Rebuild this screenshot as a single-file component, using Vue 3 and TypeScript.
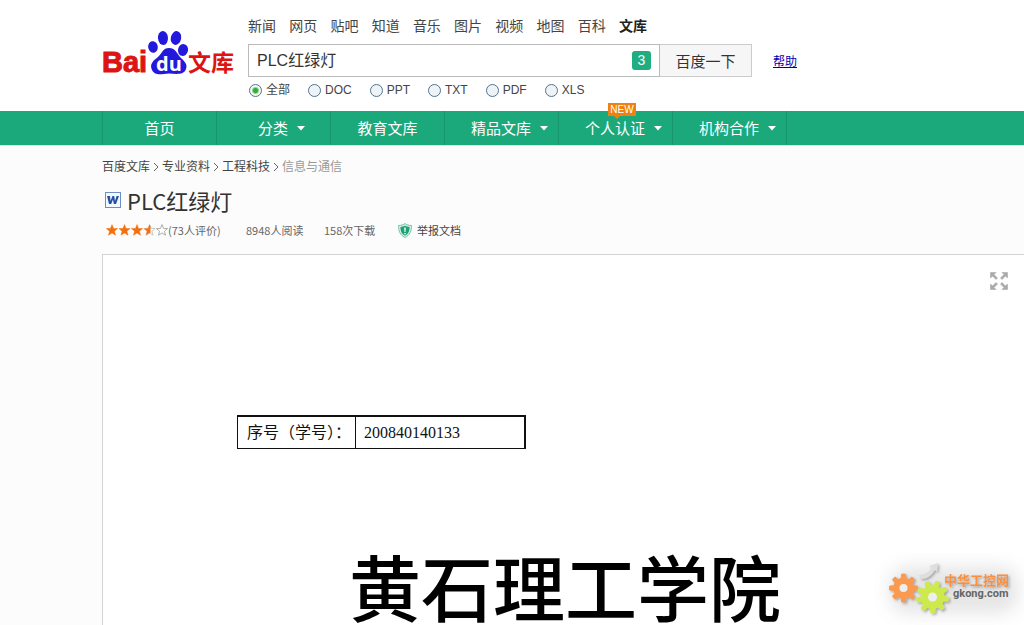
<script setup lang="ts">
import { ref } from 'vue'

interface NavItem {
  label: string
  menu: boolean
  isNew?: boolean
}

const channels: string[] = ['新闻', '网页', '贴吧', '知道', '音乐', '图片', '视频', '地图', '百科', '文库']
const formats: string[] = ['全部', 'DOC', 'PPT', 'TXT', 'PDF', 'XLS']
const navItems: NavItem[] = [
  { label: '首页', menu: false },
  { label: '分类', menu: true },
  { label: '教育文库', menu: false },
  { label: '精品文库', menu: true },
  { label: '个人认证', menu: true, isNew: true },
  { label: '机构合作', menu: true },
]
const crumbs: string[] = ['百度文库', '专业资料', '工程科技']

const query = ref('PLC红绿灯')
const format = ref('全部')

const star = 'M6 0.6 L7.5 4.4 L11.6 4.6 L8.4 7.2 L9.5 11.2 L6 8.9 L2.5 11.2 L3.6 7.2 L0.4 4.6 L4.5 4.4 Z'

function gear(cx: number, cy: number, outer: number, inner: number, teeth: number, turn: number): string {
  const points: string[] = []
  const step = (Math.PI * 2) / teeth
  for (let i = 0; i < teeth; i++) {
    const a = i * step + turn
    const corners: [number, number][] = [
      [inner, -0.3],
      [outer, -0.17],
      [outer, 0.17],
      [inner, 0.3],
    ]
    for (const [r, t] of corners) {
      points.push(`${(cx + r * Math.cos(a + t * step)).toFixed(1)},${(cy + r * Math.sin(a + t * step)).toFixed(1)}`)
    }
  }
  return points.join(' ')
}

const orangeGear = gear(29.5, 37, 14, 10, 8, 0)
const greenGear = gear(58.5, 46, 16, 11.5, 9, 0.15)
</script>

<template>
  <div class="page">
    <header class="header">
      <a class="logo" href="#" aria-label="百度文库">
        <svg width="136" height="50" viewBox="0 0 136 50">
          <text class="logo-bai" x="0" y="44">Bai</text>
          <g fill="#2319dc">
            <ellipse cx="51" cy="19" rx="4.8" ry="5.8" transform="rotate(-12 51 19)" />
            <ellipse cx="61" cy="10" rx="5" ry="7" transform="rotate(-4 61 10)" />
            <ellipse cx="74" cy="10" rx="5.2" ry="7" transform="rotate(12 74 10)" />
            <ellipse cx="81" cy="22" rx="5" ry="6" transform="rotate(12 81 22)" />
            <path d="M67 20C73 20 75 25 78 29C82 33 86 36 84 41C82 47 75 46 67 45.5C59 46 53 48 50 42C47 36 52 32 56 29C60 25 61 20 67 20Z" />
          </g>
          <text class="logo-du" x="54" y="43">du</text>
          <text class="logo-wenku" x="86" y="43">文库</text>
        </svg>
      </a>
      <div class="search">
        <nav class="channels">
          <a v-for="c in channels" :key="c" href="#" :class="{ current: c === '文库' }">{{ c }}</a>
        </nav>
        <form class="search-row" @submit.prevent>
          <div class="search-box">
            <input v-model="query" type="text" aria-label="搜索" />
            <span class="count">3</span>
          </div>
          <button class="submit" type="submit">百度一下</button>
          <a class="help" href="#">帮助</a>
        </form>
        <div class="formats">
          <label v-for="f in formats" :key="f">
            <input v-model="format" type="radio" name="format" :value="f" />
            <span>{{ f }}</span>
          </label>
        </div>
      </div>
    </header>

    <nav class="main-nav">
      <a v-for="n in navItems" :key="n.label" href="#" :class="{ menu: n.menu }">
        {{ n.label }}
        <svg v-if="n.menu" class="caret" width="8" height="5" viewBox="0 0 8 5"><path d="M0 0H8L4 4.5Z" fill="#fff" /></svg>
        <span v-if="n.isNew" class="new">NEW</span>
      </a>
    </nav>

    <main>
      <nav class="crumbs">
        <template v-for="c in crumbs" :key="c">
          <a href="#">{{ c }}</a>
          <svg width="12" height="10" viewBox="0 0 12 10"><path d="M4 1L8 5L4 9" fill="none" stroke="#666" /></svg>
        </template>
        <span>信息与通信</span>
      </nav>

      <div class="title">
        <svg width="16" height="16" viewBox="0 0 16 16">
          <rect x="0.5" y="0.5" width="15" height="15" fill="#f4f8ff" stroke="#6b8fc4" />
          <path d="M2 4H5L5.6 9L7.4 4H9.2L10 9L11.6 4H14L11 12H8.8L8 7.6L6.2 12H4Z" fill="#2450a8" />
        </svg>
        <h1>PLC红绿灯</h1>
      </div>

      <div class="meta">
        <svg class="stars" width="62" height="12" viewBox="0 0 62 12" role="img" aria-label="3.5">
          <g fill="#f4700c" stroke="#f4700c" stroke-width="0.5">
            <path :d="star" />
            <path :d="star" transform="translate(12.5 0)" />
            <path :d="star" transform="translate(25 0)" />
          </g>
          <path :d="star" transform="translate(37.5 0)" fill="#fff" stroke="#bbb" stroke-width="0.8" />
          <path d="M44.5 2V9.2L43.5 8.9L40 11.2L41.1 7.2L37.9 4.6L42 4.4L43.5 0.6Z" fill="#f4700c" />
          <path :d="star" transform="translate(50 0)" fill="#fff" stroke="#999" stroke-width="0.8" />
        </svg>
        <span class="rating">(73人评价)</span>
        <span class="reads">8948人阅读</span>
        <span class="downloads">158次下载</span>
        <a class="report" href="#">
          <svg width="14" height="15" viewBox="0 0 14 15">
            <path d="M7 0.6C9 2 11 2.5 13.4 2.5C13.6 8 12 12 7 14.5C2 12 0.4 8 0.6 2.5C3 2.5 5 2 7 0.6Z" fill="#dff3ea" stroke="#72bfa0" />
            <path d="M7 2.6C8.5 3.6 10 4 11.6 4C11.6 8 10.5 11 7 12.8C3.5 11 2.4 8 2.4 4C4 4 5.5 3.6 7 2.6Z" fill="#1fa076" />
            <path d="M6.2 4.5H7.8L7.5 9H6.5ZM6.2 10H7.8V11.3H6.2Z" fill="#fff" />
          </svg>
          举报文档
        </a>
      </div>

      <section class="document">
        <button class="expand" type="button" aria-label="全屏">
          <svg width="18" height="18" viewBox="0 0 18 18">
            <g fill="#aaa" stroke="#aaa" stroke-width="0.6">
              <path d="M0.5 0.5H6L4 2.5L7.5 6L6 7.5L2.5 4L0.5 6Z" />
              <path d="M17.5 0.5H12L14 2.5L10.5 6L12 7.5L15.5 4L17.5 6Z" />
              <path d="M0.5 17.5H6L4 15.5L7.5 12L6 10.5L2.5 14L0.5 12Z" />
              <path d="M17.5 17.5H12L14 15.5L10.5 12L12 10.5L15.5 14L17.5 12Z" />
            </g>
          </svg>
        </button>
        <table class="serial">
          <tbody>
            <tr>
              <th scope="row">序号（学号）：</th>
              <td>200840140133</td>
            </tr>
          </tbody>
        </table>
        <h2>黄石理工学院</h2>
      </section>
    </main>

    <div class="watermark">
      <svg width="150" height="74" viewBox="0 0 150 74">
        <defs>
          <filter id="halo" x="-20%" y="-40%" width="140%" height="180%"><feGaussianBlur stdDeviation="9" /></filter>
          <filter id="drop" x="-20%" y="-20%" width="150%" height="150%">
            <feDropShadow dx="1.5" dy="1.5" stdDeviation="1.2" flood-color="#555" flood-opacity="0.45" />
          </filter>
        </defs>
        <rect x="16" y="16" width="128" height="46" rx="18" fill="#888" opacity="0.22" filter="url(#halo)" />
        <g filter="url(#drop)">
          <path d="M45 24C52 24 55 20 58 17L55 15L64 12L63 21L61 19C57 25 53 28 47 28Z" fill="#dedede" />
          <polygon :points="orangeGear" fill="#fb9a50" stroke="#fb9a50" stroke-linejoin="round" />
          <polygon :points="greenGear" fill="#cdea4e" stroke="#cdea4e" stroke-linejoin="round" />
          <circle cx="29.5" cy="37" r="4" fill="#eee" />
          <circle cx="58.5" cy="46" r="4.5" fill="#eee" />
          <text class="mark-name" x="70" y="34">中华工控网</text>
        </g>
        <text class="mark-site" x="79" y="46">gkong.com</text>
      </svg>
    </div>
  </div>
</template>

<style>
body {
  margin: 0;
}
</style>

<style scoped>
.page {
  position: relative;
  min-height: 100vh;
  display: flex;
  flex-direction: column;
  background: #fcfcfc;
  color: #444;
  font-family: "Liberation Sans", "Noto Sans CJK SC", sans-serif;
  font-size: 12px;
}
a {
  color: inherit;
  text-decoration: none;
}
svg {
  display: block;
  flex: none;
}
.header {
  display: flex;
  gap: 10px;
  height: 111px;
  padding-left: 102px;
  background: #fff;
}
.logo {
  padding-top: 28px;
}
.logo-bai,
.logo-wenku {
  font-weight: 700;
  fill: #dc1414;
  stroke: #dc1414;
}
.logo-bai {
  font-size: 29px;
}
.logo-wenku {
  font-family: "Noto Sans CJK SC", sans-serif;
  font-size: 23px;
  stroke-width: 0;
}
.logo-du {
  font-family: "Open Sans", sans-serif;
  font-size: 20px;
  font-weight: 700;
  fill: #fff;
}
.search {
  flex: 1;
}
.channels {
  display: flex;
  justify-content: space-between;
  width: 399px;
  padding-top: 16px;
  font-size: 14px;
  line-height: 20px;
}
.channels .current {
  font-weight: 700;
  color: #222;
}
.search-row {
  display: flex;
  align-items: center;
  margin-top: 8px;
}
.search-box {
  display: flex;
  align-items: center;
  box-sizing: border-box;
  width: 412px;
  height: 33px;
  padding: 0 8px;
  border: 1px solid #bbb;
  background: #fff;
}
.search-box input {
  flex: 1;
  min-width: 0;
  padding: 0;
  border: 0;
  outline: 0;
  background: none;
  color: #333;
  font: inherit;
  font-size: 16px;
  line-height: 20px;
}
.count {
  width: 19px;
  border-radius: 3px;
  background: #20ad7f;
  color: #fff;
  font-size: 14px;
  line-height: 19px;
  text-align: center;
}
.submit {
  width: 92px;
  height: 33px;
  padding: 0;
  border: 1px solid #ccc;
  border-left: 0;
  background: #f6f6f6;
  color: #333;
  font: inherit;
  font-size: 15px;
}
.help {
  margin-left: 21px;
  color: #0000b0;
  text-decoration: underline;
}
.formats {
  display: flex;
  gap: 18px;
  padding: 4px 0 0 1px;
  line-height: 18px;
}
.formats label {
  display: flex;
  align-items: center;
  gap: 4px;
}
.formats input {
  appearance: none;
  width: 13px;
  height: 13px;
  margin: 0;
  border: 1px solid #53738f;
  border-radius: 50%;
  background: #edf3f7;
}
.formats input:checked {
  background: radial-gradient(circle, #2fae35 0 2px, #f3f8f3 4px);
}
.main-nav {
  display: flex;
  height: 34px;
  padding-left: 102px;
  border-bottom: 1px solid #d5ece3;
  background: #1ba97b;
  color: #fff;
  font-size: 15px;
  line-height: 33px;
}
.main-nav a {
  position: relative;
  display: flex;
  align-items: center;
  justify-content: center;
  gap: 9px;
  box-sizing: border-box;
  width: 114px;
  border-left: 1px solid #18966d;
}
.main-nav a.menu {
  padding-left: 16px;
}
.main-nav a:last-child {
  width: 115px;
  border-right: 1px solid #18966d;
}
.new {
  position: absolute;
  top: -8px;
  left: 49px;
  width: 28px;
  background: #f08010;
  color: #fff;
  font-size: 10px;
  line-height: 13px;
  text-align: center;
}
.new::after {
  content: "";
  position: absolute;
  top: 13px;
  left: 6px;
  border: 3px solid transparent;
  border-top-color: #f08010;
  border-bottom: 0;
}
main {
  flex: 1;
  display: flex;
  flex-direction: column;
  padding-left: 102px;
}
.crumbs {
  display: flex;
  align-items: center;
  padding-top: 11px;
  line-height: 20px;
}
.crumbs span {
  color: #999;
}
.title {
  display: flex;
  align-items: center;
  gap: 6px;
  padding: 7px 0 0 3px;
}
h1 {
  margin: 0;
  color: #333;
  font: 400 22px/32px "Noto Sans CJK SC", sans-serif;
}
.meta {
  display: flex;
  align-items: center;
  padding: 4px 0 0 4px;
  color: #666;
  font: 11px/20px "Noto Sans CJK SC", sans-serif;
}
.rating {
  width: 78px;
}
.reads {
  width: 78px;
}
.downloads {
  width: 74px;
}
.report {
  display: flex;
  align-items: center;
  gap: 5px;
  color: #444;
}
.document {
  flex: 1;
  display: flex;
  flex-direction: column;
  align-items: flex-start;
  margin-top: 14px;
  border: solid #d4d4d4;
  border-width: 1px 0 0 1px;
  background: #fff;
}
.expand {
  align-self: flex-end;
  margin: 17px 16px 0 0;
  padding: 0;
  border: 0;
  background: none;
}
.serial {
  margin: 125px 0 0 134px;
  border-collapse: collapse;
  border: 1px solid #111;
  border-width: 2px 2px 1px 1px;
  color: #111;
  font: 16px/31px "Liberation Serif", "Noto Sans CJK SC", serif;
}
.serial th {
  width: 108px;
  padding: 0 0 0 9px;
  border-right: 1px solid #111;
  font-weight: 400;
  text-align: left;
  white-space: nowrap;
}
.serial td {
  width: 160px;
  padding: 0 0 0 8px;
}
h2 {
  margin: 100px 0 0 246px;
  color: #000;
  font: 500 72px/72px "Noto Sans CJK SC", sans-serif;
  white-space: nowrap;
}
.watermark {
  position: absolute;
  right: 0;
  bottom: 0;
}
.mark-name {
  font: 700 13px "Noto Sans CJK SC", sans-serif;
  fill: #fb8f3c;
}
.mark-site {
  font: 700 11px Roboto, sans-serif;
  fill: #666;
}
</style>
